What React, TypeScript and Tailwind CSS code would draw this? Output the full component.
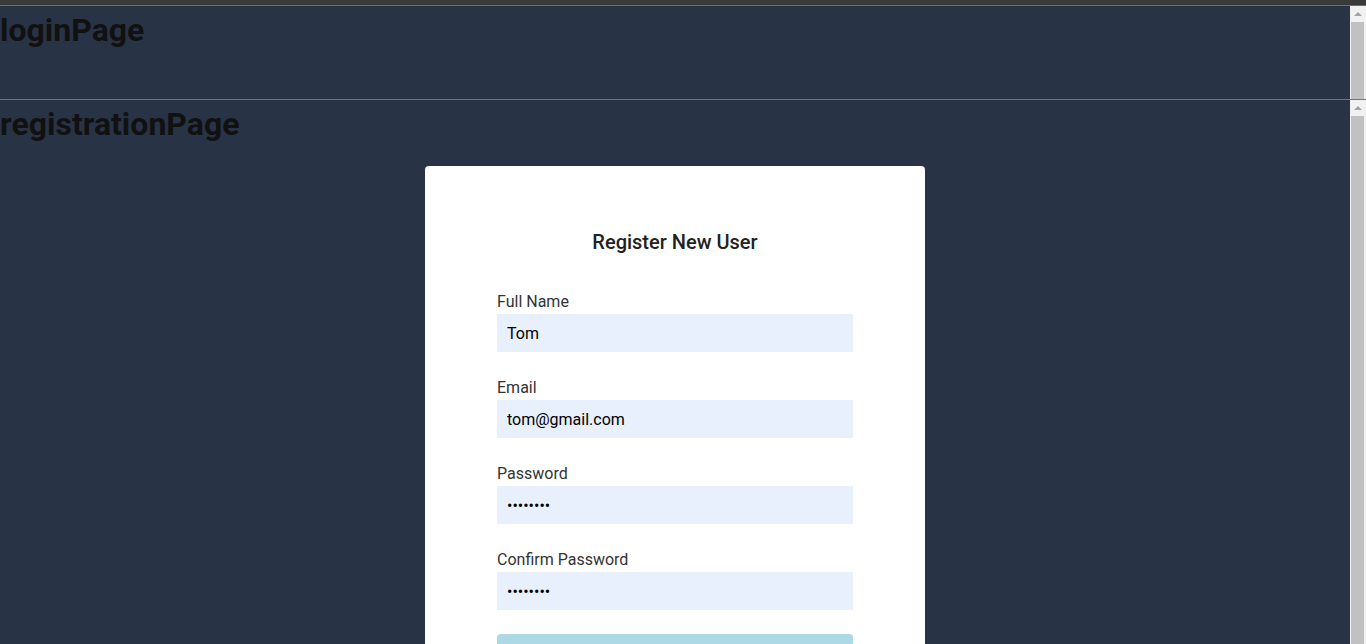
import React from 'react';

const FIELDS = [
  { label: 'Full Name', type: 'text', value: 'Tom' },
  { label: 'Email', type: 'email', value: 'tom@gmail.com' },
  { label: 'Password', type: 'password', value: '12345678' },
  { label: 'Confirm Password', type: 'password', value: '12345678' },
];

// drawn scrollbar: up button + thumb running to the bottom
function ScrollBar() {
  return (
    <div className="w-[16px] shrink-0 bg-[#f1f1f1] flex flex-col">
      <div className="h-[16px] shrink-0 flex items-center justify-center">
        <span className="w-0 h-0 border-x-[4px] border-b-[4px] border-x-transparent border-b-[#a3a3a3]" />
      </div>
      <div className="flex-1 ml-px mr-[2px] bg-[#c1c1c1]" />
    </div>
  );
}

export default function App() {
  return (
    <div className="h-screen flex flex-col bg-[#283446] font-['Roboto',sans-serif] overflow-hidden">
      {/* top strip */}
      <div className="h-[5px] bg-[#3a3a3a] shrink-0" />
      <div className="h-px bg-[#6b6e73] shrink-0" />

      {/* login panel */}
      <div className="h-[93px] shrink-0 flex">
        <section className="flex-1 overflow-hidden">
          <h1 className="text-[32px] leading-[48px] font-bold text-[#111]">loginPage</h1>
        </section>
        <ScrollBar />
      </div>
      <div className="h-px bg-[#70747b] shrink-0" />

      {/* registration panel */}
      <div className="flex-1 min-h-0 flex">
        <section className="flex-1 overflow-hidden">
          <h1 className="text-[32px] leading-[48px] font-bold text-[#111]">registrationPage</h1>
          <div className="flex justify-center pt-[18px] pb-10">
            <div className="w-[500px] bg-white rounded px-[72px] pt-[61px] pb-10">
              <h2 className="text-center text-[20px] leading-[30px] font-medium text-[#222]">Register New User</h2>
              <form className="mt-[33px] flex flex-col gap-[24px]">
                {FIELDS.map((f) => (
                  <div key={f.label} className="flex flex-col">
                    <label className="text-[16px] leading-[24px] text-[#333]">{f.label}</label>
                    <input
                      type={f.type}
                      defaultValue={f.value}
                      readOnly
                      className="h-[38px] w-full bg-[#e8f0fe] px-[10px] text-[16px] text-black outline-none"
                    />
                  </div>
                ))}
                <button type="button" className="h-[40px] w-full rounded bg-[#add8e6] text-white text-[16px]">
                  Register
                </button>
              </form>
            </div>
          </div>
        </section>
        <ScrollBar />
      </div>
    </div>
  );
}
